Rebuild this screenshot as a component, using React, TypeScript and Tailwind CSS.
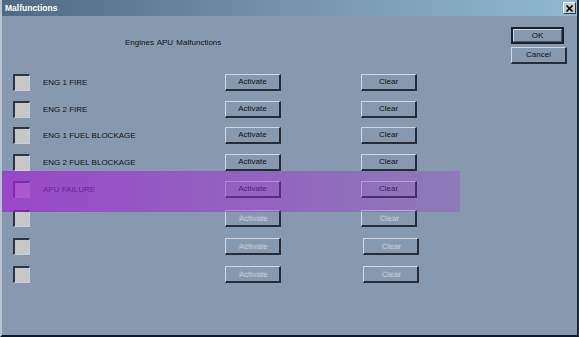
import React from "react";

type Row = { label: string; enabled: boolean; h: string; clearShift: boolean };

const rows: Row[] = [
  { label: "ENG 1 FIRE", enabled: true, h: "h-[27px]", clearShift: false },
  { label: "ENG 2 FIRE", enabled: true, h: "h-[26px]", clearShift: false },
  { label: "ENG 1 FUEL BLOCKAGE", enabled: true, h: "h-[27px]", clearShift: false },
  { label: "ENG 2 FUEL BLOCKAGE", enabled: true, h: "h-[27px]", clearShift: false },
  { label: "APU FAILURE", enabled: true, h: "h-[29px]", clearShift: false },
  { label: "", enabled: false, h: "h-[28px]", clearShift: false },
  { label: "", enabled: false, h: "h-[28px]", clearShift: true },
  { label: "", enabled: false, h: "h-[28px]", clearShift: true },
];

function Btn({
  children,
  enabled = true,
  className = "",
}: {
  children: React.ReactNode;
  enabled?: boolean;
  className?: string;
}) {
  return (
    <div
      className={
        "flex h-[17px] w-[56px] items-center justify-center border-t border-l border-t-[#cdd7e3] border-l-[#cdd7e3] border-r-2 border-b-2 border-r-[#262d38] border-b-[#262d38] bg-[#8699af] text-[8px] leading-none " +
        (enabled
          ? "text-[#111111]"
          : "text-[#a4b0c0] [text-shadow:1px_1px_0_#c9d3de]") +
        " " +
        className
      }
    >
      {children}
    </div>
  );
}

function Check() {
  return (
    <div className="h-[17px] w-[17px] shrink-0 border-t-2 border-l-2 border-t-[#2c3542] border-l-[#2c3542] border-r border-b border-r-[#c4d0dc] border-b-[#c4d0dc] bg-[#c7c7c7]" />
  );
}

export default function App() {
  return (
    <div
      className="relative flex h-[337px] w-[579px] flex-col overflow-hidden border-l-2 border-l-[#b7c3d1] border-r-2 border-r-[#1d2733] border-b-2 border-b-[#0f1a24] bg-[#8699af]"
      style={{ fontFamily: '"Liberation Sans", Arial, sans-serif' }}
    >
      {/* Title bar */}
      <div className="flex h-[16px] shrink-0 items-center justify-between bg-linear-to-r from-[#506a82] via-[#7694ac] to-[#8fbad2] pl-[3px] pr-[1px]">
        <span className="text-[8.5px] font-bold leading-none text-white">Malfunctions</span>
        <div className="flex h-[12px] w-[13px] items-center justify-center border-t border-l border-t-white border-l-white border-r border-b border-r-[#303840] border-b-[#303840] bg-[#c9ccd0]">
          <svg width="7" height="7" viewBox="0 0 7 7">
            <path d="M0.5 0.5 L6.5 6.5 M6.5 0.5 L0.5 6.5" stroke="#000" strokeWidth="1.6" />
          </svg>
        </div>
      </div>

      {/* Body */}
      <div className="flex flex-1">
        <div className="flex w-[509px] flex-col">
          <div className="h-[58px] pl-[123px] pt-[22px] text-[8px] leading-[10px] whitespace-pre text-[#111111] [word-spacing:1px]">
            {"Engines APU Malfunctions"}
          </div>
          {rows.map((r, i) => (
            <div key={i} className={"flex items-start pl-[11px] " + r.h}>
              <Check />
              <div className="ml-[13px] w-[182px] pt-[4px] text-[8px] leading-[10px] text-[#111111]">
                {r.label}
              </div>
              <Btn enabled={r.enabled}>Activate</Btn>
              <Btn enabled={r.enabled} className={r.clearShift ? "ml-[82px]" : "ml-[80px]"}>
                Clear
              </Btn>
            </div>
          ))}
        </div>
        <div className="flex flex-col gap-[3px] pt-[11px]">
          <div className="flex h-[17px] w-[53px] items-center justify-center border-2 border-[#1b222c] bg-[#8699af] text-[8px] leading-none text-[#111111]">
            <div className="flex h-full w-full items-center justify-center border-t border-l border-t-[#cdd7e3] border-l-[#cdd7e3] border-r border-b border-r-[#4a5668] border-b-[#4a5668]">
              OK
            </div>
          </div>
          <Btn className="w-[53px]">Cancel</Btn>
        </div>
      </div>

      {/* Purple highlight overlay */}
      <div className="pointer-events-none absolute left-0 top-[171px] h-[41px] w-[458px] bg-linear-to-r from-[rgba(160,40,210,0.72)] to-[rgba(160,40,210,0.27)]" />
    </div>
  );
}
